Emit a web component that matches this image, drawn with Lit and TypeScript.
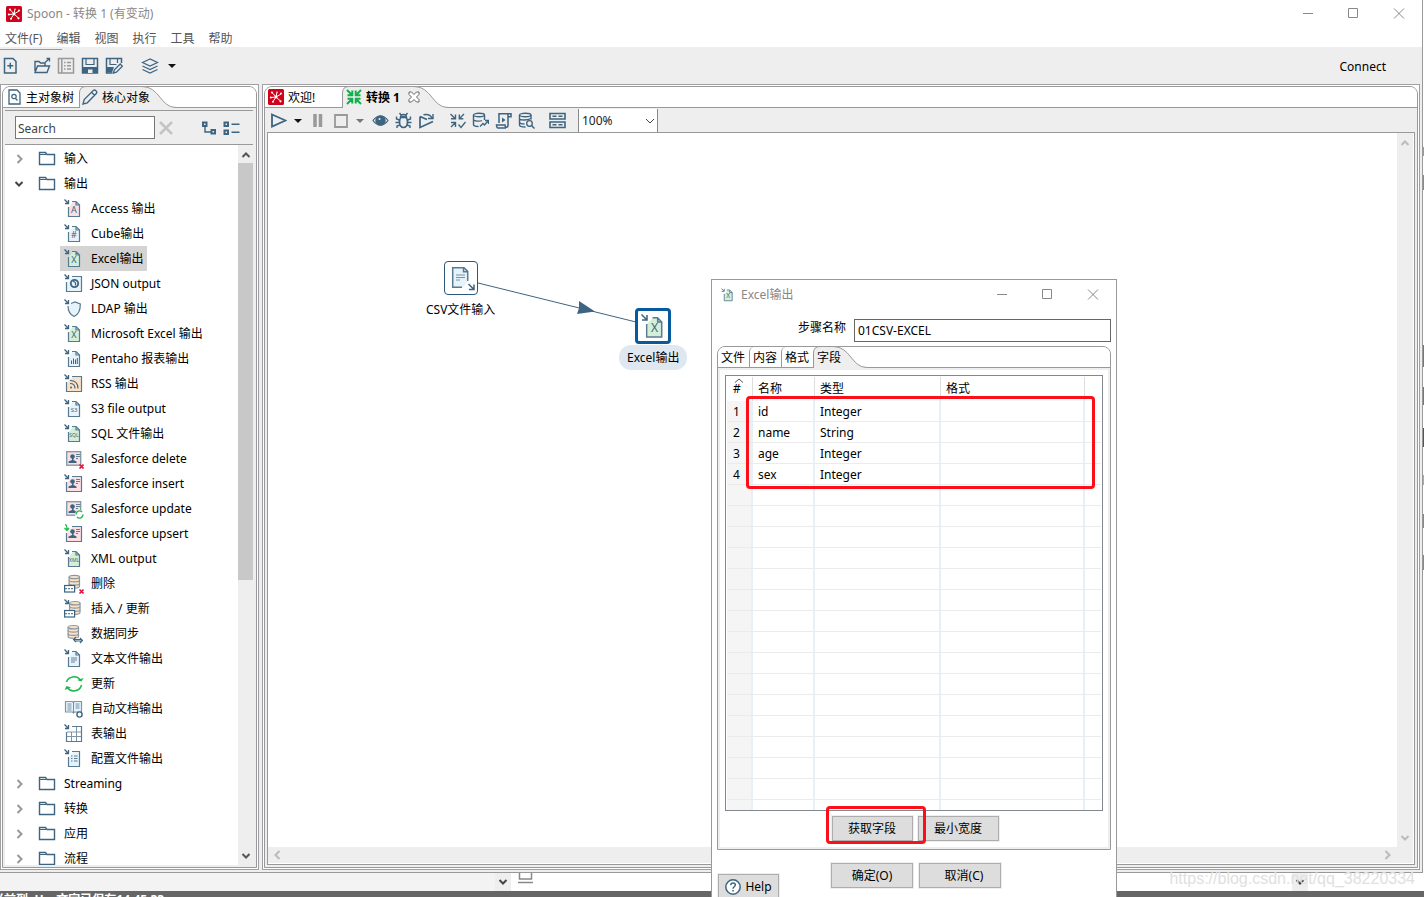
import { LitElement, html, css, svg, nothing, TemplateResult } from "lit";
import { customElement, state } from "lit/decorators.js";
import { classMap } from "lit/directives/class-map.js";

const INK = "#3d6480";
const SOFT = "#587a92";
const BLUE = "#e6f3fb";
const GREEN = "#d3efd8";
const PINK = "#fbdfe3";
const SAND = "#fbe2c6";

type Svg = TemplateResult<2>;

const icon = (w: number, h: number, body: unknown) => html`<svg
  width=${w}
  height=${h}
  viewBox="0 0 ${w} ${h}"
  fill="none"
  stroke=${INK}
  stroke-width="1.5"
  aria-hidden="true"
>${body}</svg>`;

/* Parts shared by the step icons, drawn on a 20 x 20 grid */
const inArrow = svg`<path d="M.5.5 4 4M4.500 1v3.500H1" stroke-width="1.300"/>`;
const redCross = svg`<path d="m15.500 15.500 4 4m0-4-4 4" stroke="#e0143c" stroke-width="1.6"/>`;
const sheet = (fill: string, inner: unknown) => svg`${inArrow}
  <path d="M4.500 9v8.500h11V6L12.500 2.500H9z" fill=${fill} stroke="none"/>
  <path d="M4.500 8v9.500h11V6h-3.500V3M8 2.500h4l3.500 3.500" stroke=${SOFT} stroke-width="1.200"/>${inner}`;
const glyph = (t: string, size: number) =>
  svg`<text x="10" y=${size > 6 ? 14 : 12.5} text-anchor="middle" font-size=${size} font-family="Noto Sans, sans-serif" fill=${INK} stroke="none">${t}</text>`;
const square = (fill: string, inner: unknown) => svg`${inArrow}
  <path d="M3 8.500 8.500 3H17v14H3z" fill=${fill} stroke="none"/>
  <path d="M2.500 8v9.500h15v-15H8" stroke=${SOFT} stroke-width="1.200"/>${inner}`;
const person = svg`<g fill=${INK} stroke="none"><circle cx="8.500" cy="7.500" r="2.300"/><path d="M4.500 14v-1.500L8 11V9h1.500v2l3 1.500V14z"/></g><path d="M12 5.500h4M12 7.500h4M12 9.500h2" stroke-width=".8"/>`;
const card = (extra: unknown) => svg`<rect x="2.700" y="2.700" width="14" height="13.500" fill=${PINK} stroke="#7f95a6" stroke-width="1.300"/>${person}${extra}`;
const barrel = (x: number, y: number) => svg`<g transform="translate(${x} ${y})" stroke="#8a97a2" stroke-width="1.200"><path d="M.6 2v9.500c0 2.400 10.400 2.400 10.400 0V2" fill=${SAND}/><ellipse cx="5.800" cy="2.200" rx="5.200" ry="1.700" fill=${SAND}/><path d="M.6 5.500c0 2.200 10.400 2.200 10.400 0M.6 8.700c0 2.200 10.400 2.200 10.400 0"/></g>`;
const dashes = svg`<rect x=".6" y="11.500" width="10" height="6.500" fill="#fff" stroke-width="1.200"/><path d="M1 14.700h10" stroke-dasharray="2 1" stroke-width="1"/>`;

const stepIcons: Record<string, Svg> = {
  access: sheet(PINK, glyph("A", 9)),
  cube: sheet(BLUE, glyph("#", 9)),
  excel: sheet(GREEN, glyph("X", 9)),
  json: square(BLUE, svg`<circle cx="10.500" cy="9.500" r="3.700" stroke-width="1.800"/><path d="M9 7.500c2 0 3 1 2.500 4" stroke-width="1.200"/>`),
  ldap: svg`${inArrow}<path d="M4 7c0 6 3 9 6 10.500 3.500-1.500 6.500-4 6.300-12.500L11 3 7 4.500" fill=${BLUE} stroke=${SOFT} stroke-width="1.200"/>`,
  report: sheet(BLUE, svg`<path d="M7.500 15v-3.500M9.500 15V9.500M11.500 15v-4.500M13.300 15V9" stroke-width="1"/>`),
  rss: square(SAND, svg`<circle cx="7" cy="13.500" r="1" fill=${INK} stroke="none"/><path d="M6 9.500c3 0 5 2 5 5M6 6.500c5 0 8 3 8 8" stroke-width="1.200"/>`),
  s3: sheet(BLUE, glyph("S3", 6)),
  sql: sheet(GREEN, glyph("SQL", 5)),
  sfDelete: card(redCross),
  sfInsert: square(PINK, person),
  sfUpdate: card(svg`<circle cx="15.500" cy="15.500" r="4.500" fill="#fff" stroke="none"/><path d="M12 15.500a3.500 3.500 0 0 1 6-2.500m1 2.500a3.500 3.500 0 0 1-6 2.500" stroke="#1cb84a" stroke-width="1.400"/>`),
  sfUpsert: svg`<path d="M3 8.500 8.500 3H17v14H3z" fill=${PINK} stroke="none"/><path d="M2.500 9v8.500h15v-15H8" stroke=${SOFT} stroke-width="1.200"/>${person}<path d="M1 .7c2 0 2 2 2 5M.5 4 3 6.500 5 4" stroke="#1cb84a" stroke-width="1.300"/>`,
  xml: sheet(GREEN, glyph("XML", 5)),
  remove: svg`${barrel(4.500, 0.800)}${dashes}${redCross}`,
  upsert: svg`${inArrow}${barrel(5, 2)}${dashes}`,
  sync: svg`${barrel(3.500, 1)}<path d="M9 14.500h9v4H9z" fill="#fff" stroke="none"/><path d="M9.500 15.500H18M12 13l-2.500 2.500L12 18M16 14l2.500 2.500-2.500 2.500M11 17h7" stroke-width="1.100"/>`,
  text: sheet(BLUE, svg`<path d="M7 9h6M7 11h6M7 13h4" stroke-width=".8"/>`),
  update: svg`<path d="M2.500 8C4 2.500 13 .5 16.500 6.500M17.500 11C16 17.500 7 19 3.500 13.500" stroke="#1cb84a"/><path d="m13 6 4.500 1.500L19.500 4zM7 13.500 2.500 12 .5 16z" fill="#1cb84a" stroke="none"/>`,
  doc: svg`<path d="M1.500 2.500h7l1 1 1-1h7V13h-7l-1 1-1-1h-7z" fill=${BLUE} stroke="#7f95a6" stroke-width="1.200"/><path d="M9.500 3.500V14M3.500 5h4M3.500 7h4M3.500 9h4M3.500 11h4M11.500 5h4M11.500 7h4M11.500 9h4" stroke=${SOFT} stroke-width=".8"/><circle cx="15.500" cy="15.500" r="2.600" fill="#fff" stroke-width="1.400"/>`,
  table: square("#fff", svg`<path d="M3 8h14M3 12.500h14M7.500 8v9M12.500 3v14" stroke="#7f95a6" stroke-width="1"/>`),
  config: svg`${inArrow}<path d="M5 8 9 3h6v14H5z" fill=${BLUE} stroke="none"/><path d="M4.500 8v9.500h11v-15H8" stroke=${SOFT} stroke-width="1.200"/><path d="M7 7h1.500M7 9.500h1.500M7 12h1.500M10 7h3.500M10 9.500h3.500M10 12h3.500" stroke=${SOFT} stroke-width="1"/>`,
};

const folderIcon = icon(18, 18, svg`<path d="M1.500 4V2.500h6L9 4.500h7.500v10h-15z" stroke-width="1.400"/><path d="M1.700 4.500H8" stroke-width="1"/>`);
const chevron = (d: string, color: string, w = 12) => html`<svg width=${w} height=${w} viewBox="0 0 12 12" fill="none" stroke=${color} stroke-width="2" aria-hidden="true"><path d=${d} /></svg>`;
const RIGHT = "M4.500 2 8.500 6 4.500 10";
const LEFT = "M7.500 2 3.500 6 7.500 10";
const DOWN = "M2.500 4 6 7.500 9.500 4";
const UP = "M2.500 8 6 4.500 9.500 8";
const caret = (color: string) => html`<svg width="10" height="6" viewBox="0 0 10 6" aria-hidden="true"><path d="M1 1h8L5 5z" fill=${color} /></svg>`;

const spoonLogo = html`<svg width="16" height="16" viewBox="0 0 16 16" aria-hidden="true"><rect width="16" height="16" rx="1.500" fill="#d0021b" /><g stroke="#fff" stroke-width="1" fill="#fff"><path d="M8 8 4 3.500M8 8l5-3M8 8 3 8.500M8 8l-3 4.500M8 8l4.500 4M8 8l.8-4" fill="none" /><g stroke="none"><circle cx="8" cy="8" r="1.400" /><circle cx="4" cy="3.500" r="1" /><circle cx="13" cy="4.500" r="1" /><circle cx="2.800" cy="8.500" r="1" /><circle cx="5" cy="12.800" r="1" /><circle cx="12.500" cy="12.300" r="1.100" /><circle cx="9" cy="3.200" r=".8" /></g></g></svg>`;

const fileTools = [
  [{ name: "新建", art: svg`<path d="M1.500 1.500h8.500l3 3v11.500H1.500z"/><path d="M7.300 5.800v6M4.300 8.800h6"/>` }],
  [
    { name: "打开", art: svg`<path d="M2 14V4.500h4l1.500 1.500H12v3M2 15.500h12l2.500-6.500H4.500z" stroke-width="1.400"/><path d="M12 5.500 16.500 1.500M13.500 1.500h3v3" stroke-width="1.300"/>` },
    { name: "资源库", art: svg`<g stroke="#999"><path d="M1.500 1.500h15v14.500h-15zM4.800 2v14"/><path d="M7 5.500h1.500M7 8.800h1.500M7 12h1.500M10 5.500h4M10 8.800h4M10 12h4" stroke-width="1.400"/></g>` },
    { name: "保存", art: svg`<path d="M1.500 1.500h15v14.500h-15z"/><path d="M2 10h14v6H2z" fill=${INK} stroke="none"/><path d="M5 2v5.500h8V2" stroke-width="1.200"/><path d="M7 12.500h4.500v3.500H7z" fill="#eee" stroke="none"/>` },
    { name: "另存为", art: svg`<path d="M7.500 16H1.500V1.500h15V6"/><path d="M2 10h7l-2 5.500H2z" fill=${INK} stroke="none"/><path d="M5 2v5.500h6.500M12.500 2v4" stroke-width="1.200"/><path d="m8.500 16 .7-3 6-6 2.200 2.200-6 6z" stroke-width="1.300" fill="#eee"/>` },
  ],
];
const layers = svg`<path d="M9 2 1.500 5.500 9 9l7.500-3.500z" stroke-width="1.200"/><path d="M1.500 9 9 12.500 16.500 9M1.500 12.500 9 16l7.500-3.500" stroke-width="1.200"/>`;

const runArt = {
  play: svg`<path d="M2 2.500 15.500 8.500 2 14.500z" stroke-width="1.800"/>`,
  pause: svg`<path d="M6 2v13M11.500 2v13" stroke="#999" stroke-width="3.500"/>`,
  stop: svg`<path d="M3 3h12v12H3z" stroke="#999" stroke-width="1.800"/>`,
};
const debugArt = [
  { name: "预览", art: svg`<path d="M1 8.500C5 2.500 12 2.500 16 8.500 12 14.500 5 14.500 1 8.500z" stroke-width="1.200"/><circle cx="8.500" cy="8.500" r="4.500" fill=${INK}/><circle cx="7.500" cy="7" r="1" fill="#eee" stroke="none"/>` },
  { name: "调试", art: svg`<ellipse cx="8.500" cy="10" rx="4" ry="5.500" stroke-width="1.700"/><path d="M5.500 5.500c0-4 6-4 6 0zM6 3 4.500 1M11 3l1.500-2M4.500 8 1.500 7V4.500M12.500 8l3-1V4.500M4.500 10.500H.5M12.500 10.500h4M5 13l-3 1v2M12 13l3 1v2" stroke-width="1.400"/>` },
  { name: "重放", art: svg`<path d="M2 4.500v11L15 9.500M2 4.500l7 3" stroke-width="1.700"/><path d="M5.500 2.800c4-1 7 .2 8.500 3.200M10 6.500h5V2" stroke-width="1.400"/>` },
];
const verifyArt = [
  { name: "校验", art: svg`<path d="m1.500 2 4.500 4.500M6.500 2.500v4.300H2M15 2l-4.500 4.500M10.300 2.500v4.300h4M2 15l4.500-4.500M2 10.500h4.500V15" stroke-width="1.400"/><path d="m9.500 12.500 2.500 3 4.500-5.500" stroke-width="1.300"/>` },
  { name: "影响分析", art: svg`<path d="M1.500 3v9.500c0 1.500 3 2 5 2M12.500 3v5M1.500 7.500c0 2 7 2 8.500 1" stroke-width="1.400"/><ellipse cx="7" cy="3" rx="5.500" ry="1.700" stroke-width="1.400"/><path d="m8 14.500 3-3 1.500 1.500 3.500-4M13 8.500h3.500V12" stroke-width="1.300"/>` },
  { name: "SQL", art: svg`<path d="M4 11V1.700h12v3h-3M13 2v11c0 3-3 3-3 0H1.500c0 3 1 3 3 3H11"/><path d="M7 5.500v5l3.500-2.500z" fill=${INK} stroke="none"/>` },
  { name: "数据库浏览", art: svg`<path d="M1.500 3v10c0 1.500 3 2 6 2M13 3v4.500M1.500 6.500c0 2 8 2 11.500 0M1.500 10c0 1.500 3 2 5 2" stroke-width="1.400"/><ellipse cx="7.200" cy="3" rx="5.700" ry="1.700" stroke-width="1.400"/><circle cx="11.500" cy="11.500" r="2.800" stroke-width="1.300"/><path d="m13.500 13.500 3 3"/>` },
];
const gridArt = svg`<path d="M1 1.500h15v5.500H1zM1 10h15v5.500H1z" stroke-width="1.600"/><path d="M3.500 4.300h4M9.500 4.300h4M3.500 12.800h4M9.500 12.800h4" stroke-width="1.600"/>`;

const steps: [string, string][] = [
  ["access", "Access 输出"],
  ["cube", "Cube输出"],
  ["excel", "Excel输出"],
  ["json", "JSON output"],
  ["ldap", "LDAP 输出"],
  ["excel", "Microsoft Excel 输出"],
  ["report", "Pentaho 报表输出"],
  ["rss", "RSS 输出"],
  ["s3", "S3 file output"],
  ["sql", "SQL 文件输出"],
  ["sfDelete", "Salesforce delete"],
  ["sfInsert", "Salesforce insert"],
  ["sfUpdate", "Salesforce update"],
  ["sfUpsert", "Salesforce upsert"],
  ["xml", "XML output"],
  ["remove", "删除"],
  ["upsert", "插入 / 更新"],
  ["sync", "数据同步"],
  ["text", "文本文件输出"],
  ["update", "更新"],
  ["doc", "自动文档输出"],
  ["table", "表输出"],
  ["config", "配置文件输出"],
];

const categories = [
  { name: "输入", items: [] as [string, string][] },
  { name: "输出", items: steps },
  { name: "Streaming", items: [] as [string, string][] },
  { name: "转换", items: [] as [string, string][] },
  { name: "应用", items: [] as [string, string][] },
  { name: "流程", items: [] as [string, string][] },
];

const fields = [
  ["id", "Integer"],
  ["name", "String"],
  ["age", "Integer"],
  ["sex", "Integer"],
];
const TABLE_ROWS = 20;

/* Outline of the selected tab: rounded on the left, sweeping down on the right */
const tabShape = (w: number) => html`<svg class="shape" width=${w} height="22" viewBox="0 0 ${w} 22" aria-hidden="true">
  <path d="M.5 22V7Q.5.500 7 .5H${w - 34}C${w - 16} .5 ${w - 16} 21.500 ${w} 21.500V22z" fill="#eee" />
  <path d="M.5 22V7Q.5.500 7 .5H${w - 34}C${w - 16} .5 ${w - 16} 21.500 ${w} 21.500" fill="none" stroke="#999" />
</svg>`;

const windowControls = html`<div class="controls">
  <button type="button" aria-label="最小化"><svg width="12" height="12"><path d="M1 5.500h10" stroke="#888" /></svg></button>
  <button type="button" aria-label="最大化"><svg width="12" height="12"><path d="M1.500.5h9v9h-9z" fill="none" stroke="#888" /></svg></button>
  <button type="button" aria-label="关闭"><svg width="12" height="12"><path d="m1 .5 10 10M11 .5l-10 10" stroke="#888" /></svg></button>
</div>`;

@customElement("app-root")
export class AppRoot extends LitElement {
  @state() private selected = "Excel输出";
  @state() private open = new Set(["输出"]);

  static styles = css`
    :host {
      display: block;
      position: relative;
      height: 100vh;
      overflow: hidden;
      background: #fff;
      color: #000;
      font: 12px/16px "Noto Sans", "Noto Sans CJK SC", sans-serif;
    }
    * { box-sizing: border-box; }
    button {
      font: inherit;
      color: inherit;
      background: none;
      border: 0;
      padding: 0;
      margin: 0;
      display: flex;
      align-items: center;
      white-space: nowrap;
    }
    input, select { font: inherit; color: #222; margin: 0; border-radius: 0; }
    svg { display: block; flex: none; }
    .screen { display: flex; flex-direction: column; height: 100%; }
    .frame { display: flex; flex: 1; min-height: 0; }
    .window {
      display: flex;
      flex-direction: column;
      flex: 1;
      min-width: 0;
      border-right: 1px solid #999;
      border-bottom: 1px solid #999;
    }
    .behind {
      width: 1px;
      background: linear-gradient(#fff 0 147px, #99a 147px 156px, #fff 156px 175px, #889 175px 190px, #fff 190px 345px, #777 345px 367px, #fff 367px 387px, #777 387px 405px, #fff 405px 428px, #555 428px 447px, #fff 447px 475px, #aaa 475px 485px, #fff 485px 514px, #888 514px 528px, #fff 528px 555px, #888 555px 570px, #fff 570px);
    }
    .title { display: flex; align-items: center; height: 28px; padding-left: 6px; gap: 5px; color: #888; }
    .title .name { flex: 1; font-weight: 400; font-size: 12px; margin: 0; }
    .controls { display: flex; }
    .controls button { width: 46px; height: 28px; justify-content: center; }
    .controls button:first-child { width: 44px; }
    .menu { display: flex; gap: 14px; height: 19px; padding: 2px 0 0 5px; color: #555; }
    .tools { position: relative; display: flex; align-items: center; height: 37px; padding: 1px 36px 0 3px; gap: 12px; background: #eee; }
    .tools .hint { position: absolute; left: 0; top: 2px; width: 62px; height: 1px; background: #999; }
    .group { display: flex; align-items: center; gap: 6px; }
    .tools .layers { margin-left: 6px; gap: 8px; }
    .tools .connect { margin-left: auto; padding-top: 2px; }
    .work { display: flex; gap: 3px; flex: 1; min-height: 0; padding: 0 2px 2px 0; background: #eee; }
    .panel { display: flex; padding: 1px; border: 1px solid #a0a0a4; background: #fff; min-height: 0; }
    .side { width: 259px; }
    .main { flex: 1; min-width: 0; }
    .folder {
      display: flex;
      flex-direction: column;
      flex: 1;
      min-width: 0;
      min-height: 0;
      border: 1px solid #999;
      border-radius: 8px 8px 0 0;
      background: #eee;
    }
    .tabs { display: flex; height: 21px; background: #fff; border-bottom: 1px solid #999; border-radius: 7px 7px 0 0; }
    .tabs button { position: relative; height: 20px; gap: 5px; }
    .tabs button > * { position: relative; }
    .tabs button > span { padding-top: 2px; }
    .tabs button > .shape { position: absolute; left: 0; top: -1px; }
    .side .first { width: 76px; padding-left: 5px; }
    .side .second { width: 97px; padding-left: 3px; gap: 4px; }
    .main .first { width: 77px; padding-left: 3px; gap: 4px; }
    .main .second { width: 106px; padding-left: 4px; gap: 4px; font-weight: 700; }
    .main .second .close { margin-left: 3px; }
    .side .body { display: flex; flex-direction: column; flex: 1; min-height: 0; padding: 2px 3px 2px 2px; }
    .search { display: flex; align-items: center; height: 35px; padding: 0 13px 0 10px; border-top: 1px solid #999; border-bottom: 1px solid #999; }
    .search input { width: 140px; height: 23px; padding: 2px 2px 0; border: 1px solid #777; background: #fff; }
    .search input::placeholder { color: #444; opacity: 1; }
    .search .clear { margin-left: 3px; }
    .search .expand { margin-left: auto; }
    .scroller { display: flex; flex: 1; min-height: 0; }
    .tree { flex: 1; min-width: 0; min-height: 0; overflow: hidden; background: #fff; list-style: none; margin: 0; padding: 1px 0 0; }
    .tree ul { list-style: none; margin: 0; padding: 0 0 0 55px; }
    .tree li { margin: 0; }
    .cat { height: 25px; padding-left: 8px; }
    .cat .folder-art { margin: 0 8px 0 13px; }
    .step { height: 25px; padding: 0 4px; gap: 7px; }
    .step.on { background: #d4d4d4; }
    .vbar { display: flex; flex-direction: column; align-items: center; width: 15px; padding: 1px 0; background: #eee; }
    .vbar .thumb { width: 15px; height: 417px; background: #c8c8c8; margin-bottom: auto; }
    .vbar button { height: 17px; }
    .run { display: flex; align-items: center; height: 24px; padding: 1px 0 0 5px; gap: 14px; }
    .run .debug { margin-left: -7px; }
    .zoom { position: relative; display: flex; margin-left: -2px; }
    .zoom select { appearance: none; width: 80px; height: 23px; padding: 1px 3px 0; border: 1px solid #888; border-width: 0 1px; background: #fff; }
    .zoom svg { position: absolute; right: 3px; top: 6px; pointer-events: none; }
    .stage { display: grid; grid-template-columns: 1fr 16px; grid-template-rows: 1fr 16px; flex: 1; min-height: 0; margin: 0 2px 2px 2px; padding: 0 1px 1px 0; border: 1px solid #999; background: #fff; }
    .canvas { position: relative; overflow: hidden; }
    .stage .vbar { width: 16px; justify-content: space-between; }
    .hbar { grid-column: 1 / -1; display: flex; justify-content: space-between; padding: 0 20px 0 4px; background: #eee; }
    .link { position: absolute; left: 210px; top: 148px; }
    .node { position: absolute; display: flex; flex-direction: column; align-items: center; gap: 7px; }
    .node .box { display: flex; align-items: center; justify-content: center; width: 34px; height: 34px; border: 1px solid #2b587c; border-radius: 4px; background: #fff; }
    .node.csv { left: 158px; top: 128px; }
    .node.excel { left: 351px; top: 175px; gap: 1px; }
    .node.excel .box { width: 36px; height: 36px; border: 3px solid #075a9c; }
    .node.excel .label { padding: 5px 8px 4px; border-radius: 12px; background: #dfe8f1; }
    .under { display: flex; height: 18px; background: #fff; }
    .under .pane { width: 495px; background: #f3f3f3; }
    .under .arrow { display: flex; align-items: center; justify-content: center; width: 16px; background: #eee; }
    .under .arrow.far { margin: 0 116px 0 auto; }
    .under .computer { margin-left: 6px; }
    .status { height: 6px; overflow: hidden; background: #666; color: #fff; font-weight: 700; }
    .status span { display: block; margin: 1px 0 0 -8px; }
    .mark { position: absolute; right: 9px; bottom: 9px; font: 16px/18px "Liberation Sans", sans-serif; color: #e0e0e0; }

    .dialog { position: absolute; left: 711px; top: 279px; width: 406px; border: 1px solid #999; background: #fff; }
    .dialog .title { height: 30px; padding-left: 9px; gap: 7px; }
    .dialog form { margin: 0; padding: 9px 5px 0; }
    .field { display: flex; justify-content: flex-end; gap: 8px; height: 27px; }
    .field label { padding-top: 1px; }
    .field input { width: 257px; height: 23px; padding: 0 3px; border: 1px solid #666; color: #000; }
    .dialog .tabs .t { width: 32px; padding-left: 3px; border-left: 1px solid #999; border-top-left-radius: 5px; }
    .dialog .tabs .t:first-child { border-left: 0; width: 31px; }
    .dialog .tabs .now { width: 54px; padding-left: 4px; }
    .sheet { border: 2px solid #eee; padding: 5px 5px 6px; background: #fff; }
    .grid { height: 436px; overflow: hidden; border: 1px solid #828790; padding: 1px; }
    table { width: 100%; table-layout: fixed; border-collapse: separate; border-spacing: 0; }
    th { position: relative; height: 24px; padding: 0 5px; border-right: 1px solid #ddd; font-weight: 400; text-align: left; }
    td { height: 21px; padding: 2px 5px 0; border-right: 2px solid #e8eff7; border-bottom: 1px solid #ebebeb; line-height: 16px; }
    th:last-child, td:last-child { border-right: 0; }
    td:first-child { background: #f5f5f5; text-align: center; padding: 2px 5px 0 0; }
    th:first-child { padding: 0 5px 0 0; text-align: center; }
    th svg { position: absolute; left: 7px; top: 1px; }
    .c-num { width: 26px; }
    .c-name { width: 62px; }
    .c-type { width: 126px; }
    .c-format { width: 144px; }
    .btn { justify-content: center; width: 81px; height: 25px; border: 1px solid #adadad; outline: 1px solid #eee; background: #ddd; }
    .row { display: flex; justify-content: center; gap: 5px; padding: 5px 0 0 2px; }
    .end { display: flex; justify-content: center; gap: 6px; padding-top: 13px; margin-left: 4px; }
    .end .btn { width: 82px; }
    .end .cancel { padding-left: 8px; }
    .help { width: 61px; height: 26px; gap: 4px; margin: -14px 0 0 1px; }
    .ring { position: absolute; border: 3px solid #fb1019; border-radius: 4px; pointer-events: none; }
    .ring.rows { left: 746px; top: 396px; width: 349px; height: 93px; }
    .ring.get { left: 826px; top: 806px; width: 100px; height: 38px; }
  `;

  private toggle(name: string) {
    const next = new Set(this.open);
    next.has(name) ? next.delete(name) : next.add(name);
    this.open = next;
  }

  private toolButtons(list: { name: string; art: Svg }[], size: number) {
    return list.map((t) => html`<button aria-label=${t.name}>${icon(size, size, t.art)}</button>`);
  }

  private renderSide() {
    return html`<aside class="panel side">
      <div class="folder">
        <div class="tabs" role="tablist">
          <button class="first" role="tab">
            ${icon(13, 16, svg`<path d="M1 1h8l3 3v11H1z" stroke-width="1.300"/><circle cx="6" cy="7.500" r="2.200" stroke-width="1.200"/><path d="m7.500 9.500 2 2" stroke-width="1.200"/>`)}
            <span>主对象树</span>
          </button>
          <button class="second" role="tab" aria-selected="true">
            ${tabShape(97)}
            ${icon(16, 16, svg`<path d="m1 15 1.200-4.500L11.500 1.300c1.500-1 4 1.300 3 3L5.300 13.800zM9.500 3.300l3 3" stroke-width="1.300"/>`)}
            <span>核心对象</span>
          </button>
        </div>
        <div class="body">
          <div class="search">
            <input type="text" placeholder="Search" aria-label="Search" />
            <button class="clear" aria-label="清除"><svg width="16" height="16"><path d="m2 2 12 12M14 2 2 14" stroke="#c4c4c4" stroke-width="2.500" /></svg></button>
            <div class="group expand">
              <button aria-label="展开全部">${icon(16, 16, svg`<path d="M2 2.500h3.500V6H2zM10.500 10H14v3.500h-3.500z" stroke-width="2"/><path d="M4 7v5h6" stroke-width="1.400"/>`)}</button>
              <button aria-label="折叠全部">${icon(17, 16, svg`<path d="M1.500 2.500H5V6H1.500zM1.500 10.500H5V14H1.500z" stroke-width="2"/><path d="M8.500 4.200h8M8.500 12.200h8"/>`)}</button>
            </div>
          </div>
          <div class="scroller">
            <ul class="tree">
              ${categories.map((c) => {
                const isOpen = this.open.has(c.name) && c.items.length > 0;
                return html`<li>
                  <button class="cat" @click=${() => this.toggle(c.name)}>
                    ${isOpen ? chevron(DOWN, "#444") : chevron(RIGHT, "#999")}
                    <span class="folder-art">${folderIcon}</span><span>${c.name}</span>
                  </button>
                  ${isOpen
                    ? html`<ul>
                        ${c.items.map(
                          ([art, name]) => html`<li>
                            <button class=${classMap({ step: true, on: name === this.selected })} @click=${() => (this.selected = name)}>
                              ${icon(20, 20, stepIcons[art])}<span>${name}</span>
                            </button>
                          </li>`
                        )}
                      </ul>`
                    : nothing}
                </li>`;
              })}
            </ul>
            <div class="vbar">
              <button aria-label="向上滚动">${chevron(UP, "#555")}</button>
              <div class="thumb"></div>
              <button aria-label="向下滚动">${chevron(DOWN, "#555")}</button>
            </div>
          </div>
        </div>
      </div>
    </aside>`;
  }

  private renderMain() {
    return html`<main class="panel main">
      <div class="folder">
        <div class="tabs" role="tablist">
          <button class="first" role="tab">${spoonLogo}<span>欢迎!</span></button>
          <button class="second" role="tab" aria-selected="true">
            ${tabShape(106)}
            <svg width="16" height="16" viewBox="0 0 16 16" fill="none" stroke="#11b04b" stroke-width="2"><path d="m1 1 5 5M6.300 1.500v4.800H1.500M15 1l-5 5M9.700 1.500v4.800h4.800M1 15l5-5M6.300 14.500V9.700H1.500M15 15l-5-5M9.700 14.500V9.700h4.800" /></svg>
            <span>转换 1</span>
            <svg class="close" width="14" height="12" viewBox="0 0 14 12" fill="#fff" stroke="#666"><path d="M2 1h2.500L7 3.500 9.500 1H12v2.500L9.500 6 12 8.500V11H9.500L7 8.500 4.500 11H2V8.500L4.500 6 2 3.500z" /></svg>
          </button>
        </div>
        <div class="run">
          <div class="group">
            <button aria-label="运行">${icon(17, 17, runArt.play)}</button>
            <button aria-label="运行选项">${caret("#111")}</button>
            <button aria-label="暂停">${icon(17, 17, runArt.pause)}</button>
            <button aria-label="停止">${icon(17, 17, runArt.stop)}</button>
            <button aria-label="停止选项">${caret("#777")}</button>
          </div>
          <div class="group debug">${this.toolButtons(debugArt, 17)}</div>
          <div class="group">${this.toolButtons(verifyArt, 17)}</div>
          <button aria-label="显示结果">${icon(17, 17, gridArt)}</button>
          <div class="zoom">
            <select aria-label="缩放"><option>100%</option><option>75%</option><option>50%</option></select>
            <svg width="10" height="12" viewBox="0 0 10 12" fill="none" stroke="#444"><path d="m1 4 4 4 4-4" /></svg>
          </div>
        </div>
        <div class="stage">
          <div class="canvas">
            <svg class="link" width="160" height="44" viewBox="0 0 160 44"><path d="M0 2 158 41" stroke=${INK} /><path d="M101 20 117 30.500 99 33l2-6z" fill=${INK} /></svg>
            <div class="node csv">
              <div class="box">${icon(28, 28, svg`<path d="M5 3h12l4 4v10l-5 6.500H5z" fill=${BLUE} stroke="none"/><path d="M15 23.300H5.700V3.700H17l3.700 3.700V17M16.500 3.700v4h4" stroke=${SOFT}/><path d="M9 11h9M9 13.500h9M9 16h4" stroke=${SOFT} stroke-width=".8"/><path d="m21.500 20 5 5M27 20.500v5h-5"/>`)}</div>
              <span class="label">CSV文件输入</span>
            </div>
            <div class="node excel">
              <div class="box">${icon(28, 28, svg`<path d="M8.500 11.500 14 6h5l3.500 4v14.500h-14z" fill=${GREEN} stroke="none"/><path d="M7.700 12v13h15V10h-4V6M13.500 5.700h5l4.200 4.300" stroke=${SOFT}/><path d="m2.500 2.500 5 5M8 3v5H3"/><text x="15.500" y="20" text-anchor="middle" font-size="12" font-family="Noto Sans, sans-serif" fill=${INK} stroke="none">X</text>`)}</div>
              <span class="label">Excel输出</span>
            </div>
          </div>
          <div class="vbar">
            <button aria-label="向上滚动">${chevron(UP, "#bbb")}</button>
            <button aria-label="向下滚动">${chevron(DOWN, "#bbb")}</button>
          </div>
          <div class="hbar">
            <button aria-label="向左滚动">${chevron(LEFT, "#bbb")}</button>
            <button aria-label="向右滚动">${chevron(RIGHT, "#bbb")}</button>
          </div>
        </div>
      </div>
    </main>`;
  }

  private renderDialog() {
    return html`<section class="dialog" role="dialog" aria-labelledby="dlg">
      <header class="title">
        <svg width="13" height="14" viewBox="0 0 18 19" fill="none" stroke=${SOFT} stroke-width="1.500">${stepIcons.excel}</svg>
        <h2 class="name" id="dlg">Excel输出</h2>
        ${windowControls}
      </header>
      <form @submit=${(e: Event) => e.preventDefault()}>
        <div class="field">
          <label for="step-name">步骤名称</label>
          <input id="step-name" type="text" .value=${"01CSV-EXCEL"} />
        </div>
        <div class="folder">
          <div class="tabs" role="tablist">
            ${["文件", "内容", "格式"].map((t) => html`<button type="button" class="t" role="tab"><span>${t}</span></button>`)}
            <button type="button" class="now" role="tab" aria-selected="true">${tabShape(54)}<span>字段</span></button>
          </div>
          <div class="sheet">
            <div class="grid">
              <table>
                <colgroup><col class="c-num" /><col class="c-name" /><col class="c-type" /><col class="c-format" /><col /></colgroup>
                <thead>
                  <tr>
                    <th><svg width="10" height="5"><path d="m1 4.500 4-3.500 4 3.500" fill="none" stroke="#555" /></svg>#</th>
                    <th>名称</th><th>类型</th><th>格式</th><th></th>
                  </tr>
                </thead>
                <tbody>
                  ${Array.from({ length: TABLE_ROWS }, (_, i) => {
                    const f = fields[i];
                    return html`<tr><td>${f ? i + 1 : nothing}</td><td>${f?.[0]}</td><td>${f?.[1]}</td><td></td><td></td></tr>`;
                  })}
                </tbody>
              </table>
            </div>
            <div class="row">
              <button type="button" class="btn">获取字段</button>
              <button type="button" class="btn">最小宽度</button>
            </div>
          </div>
        </div>
        <div class="end">
          <button class="btn">确定(O)</button>
          <button type="button" class="btn cancel">取消(C)</button>
        </div>
        <button type="button" class="btn help">
          ${icon(16, 16, svg`<circle cx="8" cy="8" r="7.200" fill="#fff"/><path d="M5.800 6.300c0-3 4.500-2.800 4.500-.2C10.300 7.700 8 7.800 8 9.700M8 11v1.500"/>`)}
          <span>Help</span>
        </button>
      </form>
    </section>`;
  }

  render() {
    return html`<div class="screen">
        <div class="frame">
          <div class="window">
            <header class="title">${spoonLogo}<h1 class="name">Spoon - 转换 1 (有变动)</h1>${windowControls}</header>
            <nav class="menu">
              ${["文件(F)", "编辑", "视图", "执行", "工具", "帮助"].map((m) => html`<button>${m}</button>`)}
            </nav>
            <div class="tools">
              <span class="hint"></span>
              ${fileTools.map((g) => html`<div class="group">${this.toolButtons(g, 18)}</div>`)}
              <div class="group layers">
                <button aria-label="视角">${icon(18, 18, layers)}</button>
                <button aria-label="视角选项">${caret("#111")}</button>
              </div>
              <button class="connect">Connect</button>
            </div>
            <div class="work">${this.renderSide()}${this.renderMain()}</div>
          </div>
          <div class="behind"></div>
        </div>
        <div class="under">
          <div class="pane"></div>
          <div class="arrow">${chevron(DOWN, "#444")}</div>
          <svg class="computer" width="17" height="12" fill="none" stroke="#888"><path d="M2.500 0v6h12V0M1 9.500h15" stroke-width="1.500" /></svg>
          <div class="arrow far">${chevron(DOWN, "#444")}</div>
        </div>
        <div class="status"><span>当前到, Hs, 文字已保存14:45:33</span></div>
      </div>
      <div class="mark">https://blog.csdn.net/qq_38220334</div>
      ${this.renderDialog()}
      <div class="ring rows"></div>
      <div class="ring get"></div>`;
  }
}
